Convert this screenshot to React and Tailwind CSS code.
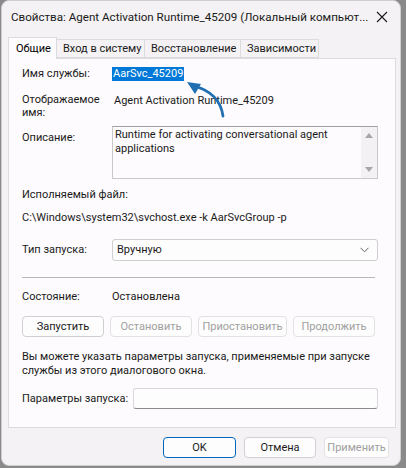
import React from 'react';

const Btn = ({ children, disabled, primary, className = '' }) => (
  <button
    className={
      'h-[21px] rounded-[4px] border bg-[#fdfdfd] leading-none ' +
      (primary ? 'border-[#0067c0] border-[1.5px] ' : 'border-[#d0d0d0] ') +
      (disabled ? 'text-[#a0a0a0] border-[#e2e2e2] ' : 'text-[#1a1a1a] ') +
      className
    }
  >
    {children}
  </button>
);

const Tab = ({ children, active, className = '' }) => (
  <div
    className={
      (active
        ? 'h-[22px] pl-[7px] pt-[4px] bg-[#fdfbfd] border border-b-0 border-[#dcdcdc] text-[#000] relative -mb-px z-10 '
        : 'h-[19px] pl-[6px] pt-[2px] bg-[#f4f2f4] border border-l-0 border-[#dcdcdc] text-[#1a1a1a] self-end ') +
      'whitespace-nowrap ' +
      className
    }
  >
    {children}
  </div>
);

export default function App() {
  return (
    <div className="w-[406px] h-[468px] bg-[#8a8a8a] overflow-hidden font-['Segoe_UI','Roboto',sans-serif] text-[11px] leading-[14px] text-[#1a1a1a]">
      <div className="relative ml-px w-[400px] h-[466px] bg-[#f4f2f4] rounded-lg border border-[#cfcfcf] flex flex-col">
        {/* title bar */}
        <div className="h-[32px] pl-[9px] pr-[12px] flex items-center justify-between text-[11.6px]">
          <span className="whitespace-nowrap text-[#1a1a1a]">Свойства: Agent Activation Runtime_45209 (Локальный компьют...</span>
          <svg width="12" height="12" viewBox="0 0 12 12" className="shrink-0">
            <path d="M1 1 L11 11 M11 1 L1 11" stroke="#1a1a1a" strokeWidth="1.1" fill="none" />
          </svg>
        </div>

        {/* tabs */}
        <div className="ml-[6px] mt-[4px] h-[21px] flex items-end">
          <Tab active className="w-[49px]">Общие</Tab>
          <Tab className="w-[88px]">Вход в систему</Tab>
          <Tab className="w-[96px]">Восстановление</Tab>
          <Tab className="w-[78px]">Зависимости</Tab>
        </div>

        {/* panel */}
        <div className="ml-[6px] w-[388px] h-[370px] bg-[#fdfbfd] border border-[#dcdcdc] px-[13px] pt-[8px]">
          <div className="flex items-center h-[14px]">
            <span className="w-[90px]">Имя службы:</span>
            <span className="bg-[#0078d7] text-white px-px leading-[14px]">AarSvc_45209</span>
          </div>

          <div className="flex mt-[12px]">
            <span className="w-[92px] leading-[13px]">
              Отображаемое
              <br />
              имя:
            </span>
            <span className="mt-[1px]">Agent Activation Runtime_45209</span>
          </div>

          <div className="flex mt-[7px]">
            <span className="w-[90px] pt-[5px]">Описание:</span>
            <div className="w-[266px] h-[53px] border border-[#c9c9c9] border-t-[#a0a0a0] flex">
              <div className="flex-1 pl-[2px] pt-[1px] leading-[14px]">
                Runtime for activating conversational agent applications
              </div>
              <div className="w-[16px] bg-[#f3f1f3] flex flex-col items-center justify-between py-[6px]">
                <svg width="8" height="5" viewBox="0 0 8 5"><path d="M0 5 L4 0 L8 5 Z" fill="#a6a6a6" /></svg>
                <svg width="8" height="5" viewBox="0 0 8 5"><path d="M0 0 L4 5 L8 0 Z" fill="#a6a6a6" /></svg>
              </div>
            </div>
          </div>

          <div className="mt-[9px]">Исполняемый файл:</div>
          <div className="mt-[9px]">C:\Windows\system32\svchost.exe -k AarSvcGroup -p</div>

          <div className="flex items-center mt-[14px]">
            <span className="w-[90px]">Тип запуска:</span>
            <div className="w-[266px] h-[22px] border border-[#cfcfcf] rounded-[3px] bg-[#fdfdfd] flex items-center justify-between pl-[4px] pr-[8px]">
              <span>Вручную</span>
              <svg width="9" height="6" viewBox="0 0 9 6">
                <path d="M0.5 0.8 L4.5 4.8 L8.5 0.8" stroke="#606060" strokeWidth="1" fill="none" />
              </svg>
            </div>
          </div>

          <div className="mt-[16px] w-[353px] h-px bg-[#b8b8b8]" />

          <div className="flex mt-[12px]">
            <span className="w-[90px]">Состояние:</span>
            <span>Остановлена</span>
          </div>

          <div className="flex mt-[12px] gap-[6px]">
            <Btn className="w-[82px]">Запустить</Btn>
            <Btn disabled className="w-[82px]">Остановить</Btn>
            <Btn disabled className="w-[89px]">Приостановить</Btn>
            <Btn disabled className="w-[82px]">Продолжить</Btn>
          </div>

          <div className="mt-[13px] leading-[14px] w-[350px]">
            Вы можете указать параметры запуска, применяемые при запуске службы из этого диалогового окна.
          </div>

          <div className="flex items-center mt-[10px]">
            <span className="w-[111px] whitespace-nowrap">Параметры запуска:</span>
            <div className="w-[245px] h-[21px] border border-[#d8d8d8] border-b-[#8a8a8a] rounded-[3px] bg-[#fdfdfd]" />
          </div>
        </div>

        {/* footer */}
        <div className="flex justify-end gap-[8px] pr-[11px] mt-[9px]">
          <Btn primary className="w-[73px]">OK</Btn>
          <Btn className="w-[72px]">Отмена</Btn>
          <Btn disabled className="w-[65px]">Применить</Btn>
        </div>

        {/* arrow annotation */}
        <svg className="absolute left-[178px] top-[73px]" width="50" height="46" viewBox="0 0 50 46">
          <path d="M43 42 C41 28, 33 17, 14 12" stroke="#1f6fb2" strokeWidth="2.8" fill="none" strokeLinecap="round" />
          <path d="M7 8 L21 10 L15 20 Z" fill="#1f6fb2" />
        </svg>
      </div>
    </div>
  );
}
